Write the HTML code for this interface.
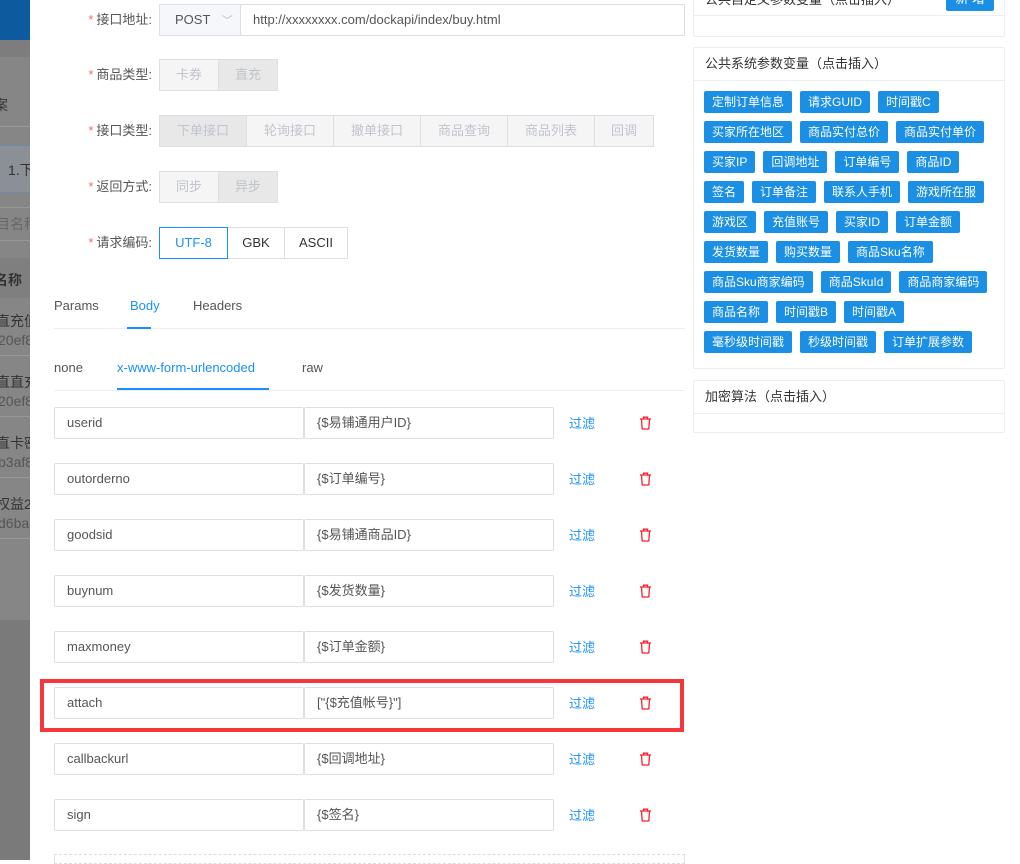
<!DOCTYPE html>
<html><head><meta charset="utf-8"><style>
*{box-sizing:border-box;margin:0;padding:0}
body{width:1020px;height:860px;overflow:hidden;position:relative;background:#fff;font-family:"Liberation Sans","Noto Sans CJK SC",sans-serif;font-size:13px;color:#333}
.a{position:absolute}
.side{left:0;top:0;width:30px;height:860px;background:#868686;overflow:hidden}
.side .t{position:absolute;white-space:nowrap;font-size:14px;color:#333}
.lbl{position:absolute;width:100px;left:52px;text-align:right;font-size:13px;color:#555;line-height:31px}
.lbl b{color:#f56c6c;font-weight:normal;margin-right:3px}
.seg{position:absolute;height:32px;border:1px solid #dcdfe6;background:#f5f5f5;color:#c0c4cc;text-align:center;line-height:30px;font-size:13px}
.seg.d{background:#e8e8e8}
.inp{position:absolute;height:32px;border:1px solid #dcdfe6;border-radius:2px;line-height:30px;padding-left:12px;font-size:13px;color:#555;background:#fff}
.flt{position:absolute;left:569px;color:#1890ff;font-size:13px}
.tag{display:inline-block;background:#1a8fe3;color:#fff;font-size:12px;height:22px;line-height:22px;padding:0 8px;border-radius:2px;margin:0 8px 8px 0;white-space:nowrap}
.card{position:absolute;left:693px;width:312px;border:1px solid #ebeef5;border-radius:2px;background:#fff}
.card .h{height:33px;line-height:32px;border-bottom:1px solid #ebeef5;padding-left:11px;font-size:13px;color:#333}
</style></head><body>
<div class="a side">
 <div class="a" style="left:0;top:0;width:30px;height:40px;background:#0e5a9e"></div>
 <div class="a" style="left:0;top:40px;width:30px;height:17px;background:#7d7d7d"></div>
 <div class="t" style="left:-6px;top:95px">案</div>
 <div class="a" style="left:0;top:126px;width:30px;height:1px;background:#999"></div>
 <div class="a" style="left:0;top:145px;width:30px;height:48px;background:#8a9096;border-top:1px solid #6a8aa8;border-bottom:1px solid #6a8aa8"></div>
 <div class="t" style="left:8px;top:160px">1.下</div>
 <div class="a" style="left:0;top:207px;width:30px;height:1px;background:#999"></div>
 <div class="t" style="left:-4px;top:214px;color:#666">目名称</div>
 <div class="a" style="left:0;top:240px;width:30px;height:1px;background:#999"></div>
 <div class="a" style="left:0;top:258px;width:30px;height:40px;background:#7f7f7f"></div>
 <div class="t" style="left:-6px;top:270px;font-weight:bold">名称</div>
 <div class="t" style="left:-4px;top:311px">直充值</div><div class="t" style="left:-2px;top:332px;color:#555">20ef8</div>
 <div class="a" style="left:0;top:355px;width:30px;height:1px;background:#999"></div>
 <div class="t" style="left:-4px;top:372px">直直充</div><div class="t" style="left:-2px;top:393px;color:#555">20ef8</div>
 <div class="a" style="left:0;top:416px;width:30px;height:1px;background:#999"></div>
 <div class="t" style="left:-4px;top:433px">直卡密</div><div class="t" style="left:-2px;top:454px;color:#555">b3af8</div>
 <div class="a" style="left:0;top:477px;width:30px;height:1px;background:#999"></div>
 <div class="t" style="left:-4px;top:494px">权益2</div><div class="t" style="left:-2px;top:515px;color:#555">d6bac</div>
 <div class="a" style="left:0;top:538px;width:30px;height:1px;background:#999"></div>
 <div class="a" style="left:0;top:620px;width:30px;height:240px;background:#7a7a7a"></div>
</div>

<div class="lbl" style="top:4px"><b>*</b>接口地址:</div>
<div class="seg" style="left:159px;top:4px;width:82px;background:#f5f7fa;color:#555;text-align:left;padding-left:15px">POST <span style="color:#bbb;margin-left:8px;font-size:11px">﹀</span></div>
<div class="inp" style="left:240px;top:4px;width:445px">http://xxxxxxxx.com/dockapi/index/buy.html</div>

<div class="lbl" style="top:59px"><b>*</b>商品类型:</div>
<div class="seg" style="left:159px;top:59px;width:60px">卡券</div>
<div class="seg d" style="left:218px;top:59px;width:60px">直充</div>

<div class="lbl" style="top:115px"><b>*</b>接口类型:</div>
<div class="seg d" style="left:159px;top:115px;width:88px">下单接口</div>
<div class="seg" style="left:246px;top:115px;width:88px">轮询接口</div>
<div class="seg" style="left:333px;top:115px;width:88px">撤单接口</div>
<div class="seg" style="left:420px;top:115px;width:88px">商品查询</div>
<div class="seg" style="left:507px;top:115px;width:88px">商品列表</div>
<div class="seg" style="left:594px;top:115px;width:60px">回调</div>

<div class="lbl" style="top:171px"><b>*</b>返回方式:</div>
<div class="seg" style="left:159px;top:171px;width:60px">同步</div>
<div class="seg d" style="left:218px;top:171px;width:60px">异步</div>

<div class="lbl" style="top:227px"><b>*</b>请求编码:</div>
<div class="seg" style="left:227px;top:227px;width:58px;background:#fff;color:#333">GBK</div>
<div class="seg" style="left:284px;top:227px;width:64px;background:#fff;color:#333">ASCII</div>
<div class="seg" style="left:159px;top:227px;width:69px;background:#fff;color:#1890ff;border-color:#1890ff">UTF-8</div>

<div class="a" style="left:54px;top:298px;color:#555">Params</div>
<div class="a" style="left:130px;top:298px;color:#1890ff">Body</div>
<div class="a" style="left:193px;top:298px;color:#555">Headers</div>
<div class="a" style="left:54px;top:328px;width:631px;height:1px;background:#eee"></div>
<div class="a" style="left:127px;top:327px;width:24px;height:2px;background:#1890ff"></div>

<div class="a" style="left:54px;top:360px;color:#555">none</div>
<div class="a" style="left:117px;top:360px;color:#1890ff">x-www-form-urlencoded</div>
<div class="a" style="left:302px;top:360px;color:#555">raw</div>
<div class="a" style="left:54px;top:390px;width:631px;height:1px;background:#eee"></div>
<div class="a" style="top:388px;height:2px;background:#1890ff;left:117px;width:152px"></div>

<div class="a" style="left:40px;top:679px;width:644px;height:53px;border:4px solid #f5363a"></div>

<div id="rows"></div>
<script>
var d=[["userid","{$易铺通用户ID}"],["outorderno","{$订单编号}"],["goodsid","{$易铺通商品ID}"],["buynum","{$发货数量}"],["maxmoney","{$订单金额}"],["attach","[\"{$充值帐号}\"]"],["callbackurl","{$回调地址}"],["sign","{$签名}"]];
var h="";d.forEach(function(r,i){var y=407+i*56;
h+='<div class="inp" style="left:54px;top:'+y+'px;width:250px">'+r[0]+'</div><div class="inp" style="left:304px;top:'+y+'px;width:250px">'+r[1].replace(/</g,"&lt;")+'</div><div class="flt" style="top:'+(y+6)+'px">过滤</div>'+
'<svg class="a" style="left:639px;top:'+(y+9)+'px" width="13" height="14" viewBox="0 0 13 14"><path d="M1 3H12M4.5 3V1.2H8.5V3M2.5 3.5L3.2 13H9.8L10.5 3.5" fill="none" stroke="#f5222d" stroke-width="1.3"/></svg>';});
document.getElementById("rows").innerHTML=h;
</script>
<div class="a" style="left:54px;top:854px;width:631px;height:10px;border:1px dashed #ddd"></div>

<div class="card" style="top:-18px;height:55px"><div class="h" style="line-height:34px">公共自定义参数变量（点击插入）<span style="position:absolute;right:10px;top:4px;background:#1a8fe3;color:#fff;padding:0 9px;height:24px;line-height:24px;font-size:13px;border-radius:2px">新 增</span></div></div>
<div class="card" style="top:47px;height:322px"><div class="h">公共系统参数变量（点击插入）</div>
<div style="padding:10px 0 0 10px;line-height:0;font-size:0">
<span class="tag">定制订单信息</span><span class="tag">请求GUID</span><span class="tag">时间戳C</span><br>
<span class="tag">买家所在地区</span><span class="tag">商品实付总价</span><span class="tag">商品实付单价</span><br>
<span class="tag">买家IP</span><span class="tag">回调地址</span><span class="tag">订单编号</span><span class="tag">商品ID</span><br>
<span class="tag">签名</span><span class="tag">订单备注</span><span class="tag">联系人手机</span><span class="tag">游戏所在服</span><br>
<span class="tag">游戏区</span><span class="tag">充值账号</span><span class="tag">买家ID</span><span class="tag">订单金额</span><br>
<span class="tag">发货数量</span><span class="tag">购买数量</span><span class="tag">商品Sku名称</span><br>
<span class="tag">商品Sku商家编码</span><span class="tag">商品SkuId</span><span class="tag">商品商家编码</span><br>
<span class="tag">商品名称</span><span class="tag">时间戳B</span><span class="tag">时间戳A</span><br>
<span class="tag">毫秒级时间戳</span><span class="tag">秒级时间戳</span><span class="tag">订单扩展参数</span>
</div></div>
<div class="card" style="top:380px;height:53px"><div class="h">加密算法（点击插入）</div></div>
</body></html>
